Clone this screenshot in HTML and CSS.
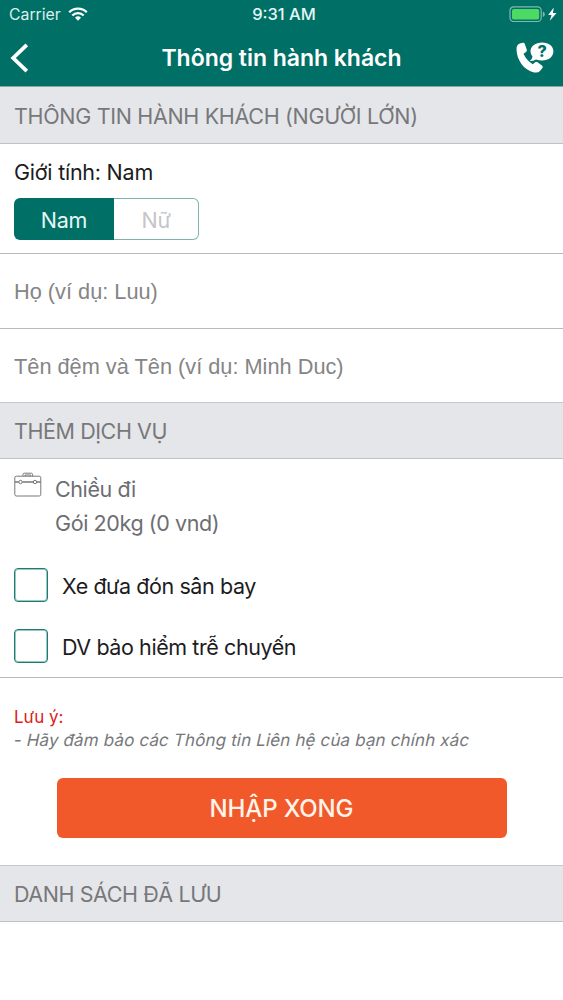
FILE: index.html
```html
<!DOCTYPE html>
<html lang="vi">
<head>
<meta charset="utf-8">
<title>Thông tin hành khách</title>
<link rel="stylesheet" href="styles.css">
</head>
<body>
<div class="app">
  <header class="top">
    <div class="status">
      <div class="status-left">
        <span class="carrier">Carrier</span>
        <svg class="wifi" width="20" height="14" viewBox="0 0 20 14" fill="none" stroke="#fff" stroke-width="2.3"><path d="M1.2 5.2a12.6 12.6 0 0 1 17.6 0"/><path d="M4.3 8.5a8.2 8.2 0 0 1 11.4 0"/><path d="M7 10.7a4.3 4.3 0 0 1 6 0L10 13.7z" fill="#fff" stroke="none"/></svg>
      </div>
      <span class="clock">9:31 AM</span>
      <div class="status-right">
        <svg width="49" height="16" viewBox="0 0 49 16"><rect x="1" y=".9" width="31.2" height="14.6" rx="3.6" fill="none" stroke="#7fbcae" stroke-width="1.2"/><rect x="3" y="2.9" width="27.2" height="10.6" rx="1.8" fill="#4cd964"/><path d="M33.8 5.5q2 .7 2 2.7t-2 2.7z" fill="#7fbcae"/><path d="M44.8 1.5 39.2 9h3.3l-1.7 5.8L47.6 7h-3.7z" fill="#fff"/></svg>
      </div>
    </div>
    <nav class="nav">
      <svg class="back" width="20" height="30" viewBox="0 0 20 30" fill="none" stroke="#fff" stroke-width="3.8"><path d="M16.8 1.8 3.2 15l13.6 13.2"/></svg>
      <h1 class="title">Thông tin hành khách</h1>
      <svg class="help" width="40" height="34" viewBox="0 0 40 34"><path fill="#fff" d="M4.900 1.500 7.800.800Q9.300.500 9.800 2l2 5.800q.4 1.400-.8 2.200L8.500 11.700q2.900 6.600 9.300 10.500l2.400-2q1.200-.9 2.400 0l4.600 3.600q1.100 1 .2 2.200l-2.200 2.700q-2.200 2.500-6 1.700C8.600 28.200 1.700 17.700 1.500 7.200 1.500 4.100 2.600 2.200 4.900 1.500z"/><path fill="#fff" d="M27.200.6c6.700 0 11.200 3.800 11.200 8.900s-4.500 9-11.200 9q-3.300 0-6.200-1.100-2.300 1.700-6.200 1.700 2.500-2.200 2.700-4.300-2-2.300-2-5.300C15.500 4.400 20.500.6 27.200.6z"/><text x="27.2" y="15.1" text-anchor="middle" class="q">?</text></svg>
    </nav>
  </header>

  <h2 class="section first">THÔNG TIN HÀNH KHÁCH (NGƯỜI LỚN)</h2>
  <section class="gender">
    <p class="label">Giới tính: Nam</p>
    <div class="segment">
      <button class="seg on">Nam</button>
      <button class="seg off">Nữ</button>
    </div>
  </section>
  <div class="field">Họ (ví dụ: Luu)</div>
  <div class="field last">Tên đệm và Tên (ví dụ: Minh Duc)</div>

  <h2 class="section">THÊM DỊCH VỤ</h2>
  <section class="services">
    <div class="bag">
      <svg width="28" height="25" viewBox="0 0 28 25" fill="none" stroke="#77787b" stroke-width="1"><rect x=".8" y="4.2" width="26" height="19.8" rx="1.6"/><path d="M9 4.2V2.4q0-1.2 1.2-1.2h7.2q1.200 0 1.200 1.200v1.800M11 4.200V3h5.600v1.200"/><path d="M1 10h3.700M8.300 10h10.900M22.800 10h3.900" stroke-width="1.4"/><circle cx="6.5" cy="10" r="1.7"/><circle cx="21" cy="10" r="1.7"/></svg>
      <div class="bag-text"><p>Chiều đi</p><p>Gói 20kg (0 vnd)</p></div>
    </div>
    <div class="check"><span class="box"></span><span class="name">Xe đưa đón sân bay</span></div>
    <div class="check"><span class="box"></span><span class="name">DV bảo hiểm trễ chuyến</span></div>
  </section>

  <section class="note">
    <p class="warn">Lưu ý:</p>
    <p class="info"><span class="slant">- Hãy đảm bảo các Thông tin Liên hệ của bạn chính xác</span></p>
    <button class="submit">NHẬP XONG</button>
  </section>
  <h2 class="section">DANH SÁCH ĐÃ LƯU</h2>
</div>
</body>
</html>
```
FILE: styles.css
```css
* { box-sizing: border-box; }
body, h1, h2, p { margin: 0; }
body { background: #fff; color: #1c1c1e; font-family: Inter, "Noto Sans", sans-serif; white-space: nowrap; }
.app { width: 563px; height: 1000px; overflow: hidden; }

.top { height: 87px; background: #006f66; border-bottom: 1px solid #7fa9a5; color: #fff; }
.status { height: 28px; display: grid; grid-template-columns: 1fr auto 1fr; align-items: center; font-size: 16.5px; padding: 0 5px 0 9px; }
.status-left { display: flex; align-items: center; gap: 7px; color: #d9f1ee; }
.carrier { font-size: 15.8px; }
.status-right { display: flex; justify-content: flex-end; }
.clock { font-weight: 500; color: #e4f7f5; padding-left: 1px; }
.nav { height: 58px; display: grid; grid-template-columns: 60px 1fr 60px; align-items: center; padding: 2px 8px 0 10px; }
.title { font-size: 23px; font-weight: 600; text-align: center; line-height: 30px; padding-right: 2px; letter-spacing: -.03px; }
.help { justify-self: end; margin-top: 2px; }
.q { font: 800 16px Inter, sans-serif; fill: #006f66; }

.section { height: 57px; padding: 0 14px; display: flex; align-items: center; background: #e5e6e9; border-top: 1px solid #c8c8ca; border-bottom: 1px solid #c0c1c2; color: #77787b; font-size: 21.5px; letter-spacing: -.42px; font-weight: 400; }
.first { border-top: 0; padding-top: 2px; letter-spacing: -.32px; }

.gender { height: 110px; padding: 14px 14px 0; border-bottom: 1px solid #b9b9bb; }
.label { font-size: 21.5px; letter-spacing: -.24px; line-height: 28px; }
.segment { display: flex; width: 185px; height: 42px; margin-top: 12px; }
.seg { padding: 2px 0 0; font: 400 21.5px Inter, sans-serif; letter-spacing: -.2px; }
.on { width: 100px; border: 0; border-radius: 6px 0 0 6px; background: #006f66; color: #e6f7f4; }
.off { flex: 1; border: 1px solid #7db5ad; border-left: 0; border-radius: 0 6px 6px 0; background: #fff; color: #c5c6c8; }

.field { height: 75px; padding: 2px 14px 0; display: flex; align-items: center; border-bottom: 1px solid #b9b9bb; color: #858585; font: 21.75px "Liberation Sans", Arial, sans-serif; }
.last { height: 73px; border-bottom: 0; }

.services { height: 219px; padding: 13px 14px 0; border-bottom: 1px solid #b9b9bb; }
.bag { display: flex; gap: 13px; color: #6d6e72; font-size: 21.5px; letter-spacing: -.4px; line-height: 34px; margin-bottom: 28px; }
.check { display: flex; align-items: center; gap: 14px; height: 34px; margin-bottom: 27px; font-size: 21.5px; letter-spacing: -.42px; }
.name { padding-top: 2px; }
.box { width: 34px; height: 34px; border: 1px solid #1c7b72; border-radius: 4px; box-shadow: inset 0 0 0 1px #9cc8c2; }

.note { height: 187px; padding: 28px 14px 0; font-size: 17px; line-height: 23px; }
.warn { color: #e02020; }
.info { color: #77787b; }
.slant { display: inline-block; transform: skewX(-12deg); letter-spacing: .14px; }
.submit { display: block; width: 450px; height: 60px; margin: 26px 0 0 42.5px; border: 0; border-radius: 6px; background: #f1592a; color: #fff4ea; font: 500 24px Inter, sans-serif; letter-spacing: -.15px; }
```
